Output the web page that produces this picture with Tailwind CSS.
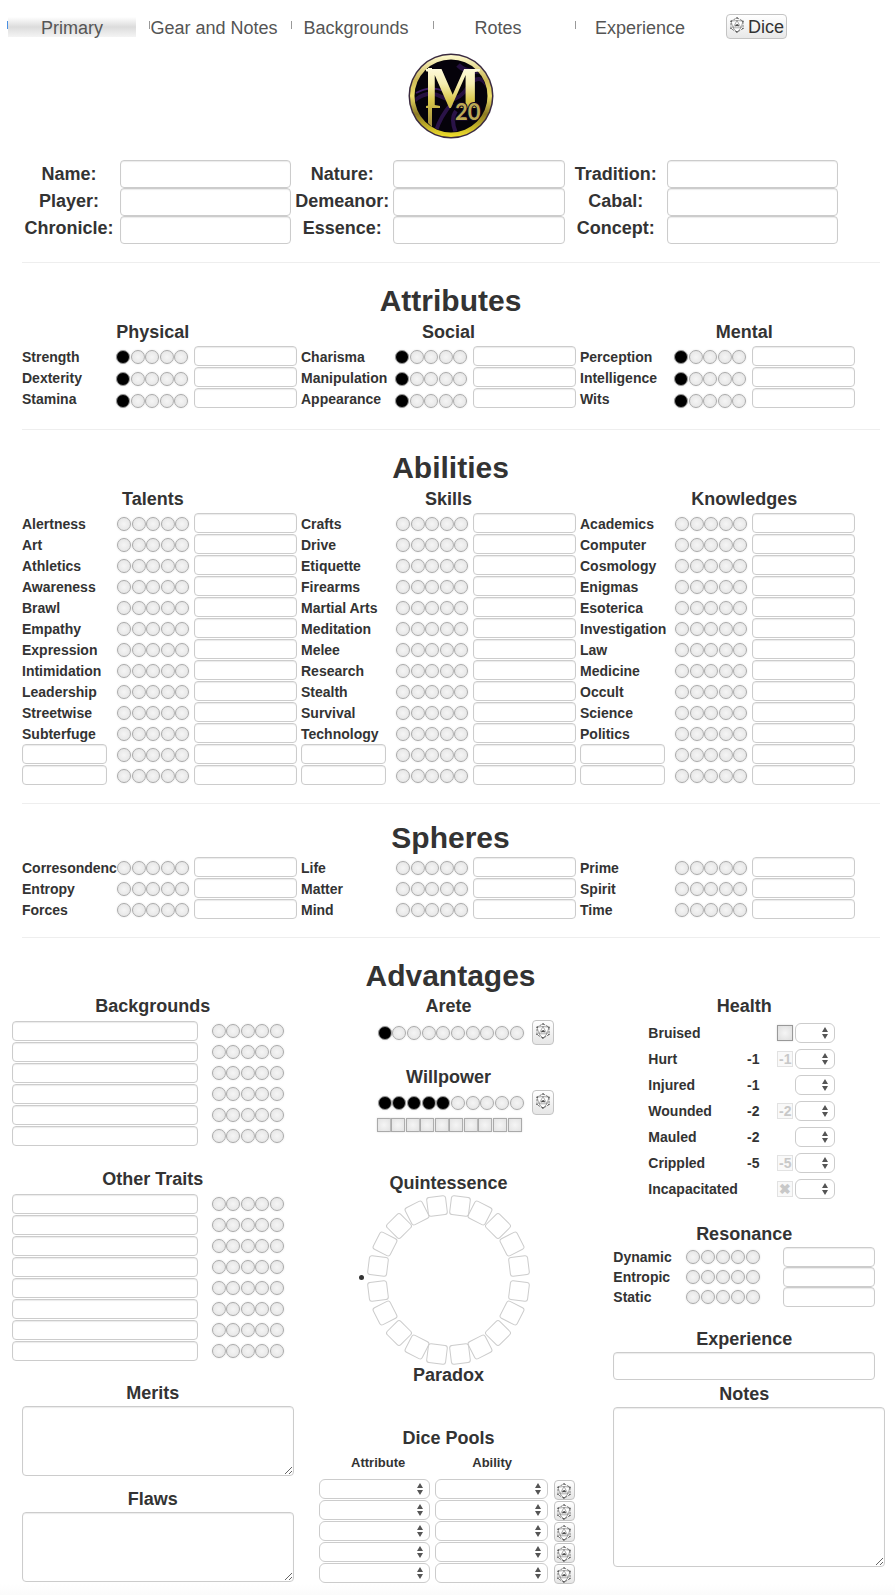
<!DOCTYPE html>
<html lang="en">
<head>
<meta charset="utf-8">
<title>Mage 20 Character Sheet</title>
<script src="https://cdn.jsdelivr.net/npm/@tailwindcss/browser@4"></script>
</head>
<body class="bg-white font-['Liberation_Sans',Arial,sans-serif] text-[#333]">

<!-- Shared d20 icon -->
<svg class="hidden" aria-hidden="true">
  <symbol id="d20" viewBox="0 0 14 16">
    <path d="M7 .8 13 4.2V11.6L7 15.2 1 11.6V4.2Z" fill="#fff" stroke="#444" stroke-width=".7" stroke-dasharray="2.500 1"/>
    <path d="M7 3.500 3 10.8H11ZM1 4.2 7 3.500 13 4.2M1 4.2 3 10.8M13 4.2 11 10.8M3 10.8 7 15.2 11 10.8" fill="none" stroke="#555" stroke-width=".5"/>
    <path d="M5.4 9.4 6.3 7.6 7 9.2 7.7 7.4 8.7 9.4" fill="none" stroke="#222" stroke-width=".9"/>
    <path d="M.5 4.2H1.5M12.5 4.2H13.5M.5 11.4H1.5M12.5 11.4H13.5M6.300 1H7.700M6.300 14.9H7.700" stroke="#111" stroke-width=".9"/>
  </symbol>
</svg>

<nav class="flex items-center pt-3.5 pl-2" aria-label="Sheet sections">
  <div class="flex gap-3.5 text-lg leading-[22px] text-[#555]">
    <button class="relative h-5 w-32 bg-[linear-gradient(#fff,#dcdcdc_50%,#f4f4f4)] leading-[22px] whitespace-nowrap before:absolute before:top-1 before:-left-px before:h-2 before:w-px before:bg-[#4a90e2]">Primary</button>
    <button class="relative h-5 w-32 leading-[22px] whitespace-nowrap before:absolute before:top-1 before:-left-px before:h-2 before:w-px before:bg-[#999]">Gear and Notes</button>
    <button class="relative h-5 w-32 leading-[22px] whitespace-nowrap before:absolute before:top-1 before:-left-px before:h-2 before:w-px before:bg-[#999]">Backgrounds</button>
    <button class="relative h-5 w-32 leading-[22px] whitespace-nowrap before:absolute before:top-1 before:-left-px before:h-2 before:w-px before:bg-[#999]">Rotes</button>
    <button class="relative h-5 w-32 leading-[22px] whitespace-nowrap before:absolute before:top-1 before:-left-px before:h-2 before:w-px before:bg-[#999]">Experience</button>
  </div>
  <button class="ml-[22px] flex h-[25px] items-center gap-1 rounded border border-[#c4c4c4] bg-linear-to-b from-white to-[#e8e8e8] pr-0.5 pl-[3px] text-lg leading-6"><svg class="mb-1 h-4 w-3.5 shrink-0"><use href="#d20"/></svg>Dice</button>
</nav>

<main>
  <div class="mt-3 flex justify-center pl-1.5">
  <svg class="h-[90px] w-[90px]" viewBox="0 0 90 90" role="img" aria-label="M20">
    <defs>
      <linearGradient id="ring" x1="0" y1="0" x2="0" y2="1">
        <stop offset="0" stop-color="#fffbd0"/><stop offset=".3" stop-color="#cdb957"/><stop offset=".5" stop-color="#efe06a"/><stop offset=".72" stop-color="#8c7a24"/><stop offset="1" stop-color="#f2e02c"/>
      </linearGradient>
      <linearGradient id="gold" gradientUnits="userSpaceOnUse" x1="0" y1="16" x2="0" y2="72">
        <stop offset="0" stop-color="#fffbe0"/><stop offset=".3" stop-color="#f6eeb0"/><stop offset=".6" stop-color="#d8c64a"/><stop offset="1" stop-color="#a89440"/>
      </linearGradient>
      <clipPath id="face"><circle cx="45" cy="45" r="36"/></clipPath>
    </defs>
    <circle cx="45" cy="45" r="42.500" fill="#3a2a40"/>
    <circle cx="45" cy="45" r="41" fill="url(#ring)"/>
    <circle cx="45" cy="45" r="36.500" fill="#05020a"/>
    <g clip-path="url(#face)" fill="none" stroke="#3a1b63">
      <path d="M8 50Q22 38 36 46T62 36T84 40" stroke-width="4" opacity=".6"/>
      <path d="M10 42Q24 34 38 40" stroke-width="2"/>
      <path d="M46 52Q34 66 30 80M50 60Q44 68 50 82" stroke-width="4" opacity=".7"/>
      <path d="M52 14Q60 22 74 20" stroke-width="5" opacity=".6"/>
    </g>
    <path d="M22 17H26V76L22 72Z" fill="url(#gold)"/>
    <text font-family="Liberation Serif" font-weight="700" font-size="60" fill="url(#gold)"><tspan x="19" y="57">M</tspan><tspan x="49" y="69" font-family="Lato" font-size="22" fill="#bca955" stroke="#120820" stroke-width="2" paint-order="stroke">20</tspan></text>
  </svg>
  </div>

  <section id="identity" class="mt-[19px] mr-[57px] ml-[18px] grid grid-cols-[102px_1fr_102px_1fr_102px_1fr]" aria-label="Character"></section>

  <hr class="mt-[18px] mr-[15px] ml-[22px] border-[#eee]">
  <section class="mt-[19px]">
    <h2 class="pl-1.5 text-center text-3xl leading-[38px] font-bold">Attributes</h2>
    <div class="mr-[3px] mb-[3px] ml-[5px] grid grid-cols-3 pt-px text-center text-lg leading-[22px] font-bold"><h3>Physical</h3><h3>Social</h3><h3>Mental</h3></div>
    <div id="attributes" class="mr-9 ml-[22px] grid grid-cols-3"></div>
  </section>

  <hr class="mt-[17px] mr-[15px] ml-[22px] border-[#eee]">
  <section class="mt-[19px]">
    <h2 class="pl-1.5 text-center text-3xl leading-[38px] font-bold">Abilities</h2>
    <div class="mr-[3px] mb-[3px] ml-[5px] grid grid-cols-3 pt-px text-center text-lg leading-[22px] font-bold"><h3>Talents</h3><h3>Skills</h3><h3>Knowledges</h3></div>
    <div id="abilities" class="mr-9 ml-[22px] grid grid-cols-3"></div>
  </section>

  <hr class="mt-[17px] mr-[15px] ml-[22px] border-[#eee]">
  <section class="mt-[15px]">
    <h2 class="pl-1.5 text-center text-3xl leading-[38px] font-bold">Spheres</h2>
    <div id="spheres" class="mr-9 ml-[22px] grid grid-cols-3"></div>
  </section>

  <hr class="mt-[17px] mr-[15px] ml-[22px] border-[#eee]">
  <section class="mt-[19px]">
    <h2 class="pl-1.5 text-center text-3xl leading-[38px] font-bold">Advantages</h2>
    <div class="mr-[3px] ml-[5px] grid grid-cols-3 items-start">
      <div>
        <h3 class="mb-1 text-center text-lg leading-[22px] font-bold">Backgrounds</h3>
        <div id="backgrounds"></div>
        <h3 class="mt-[21px] mb-1 text-center text-lg leading-[22px] font-bold">Other Traits</h3>
        <div id="traits"></div>
        <h3 class="mt-5 mb-0.5 text-center text-lg leading-[22px] font-bold"><label for="merits">Merits</label></h3>
        <div class="mr-[7px] ml-[17px]"><textarea id="merits" class="block h-[70px] w-full resize rounded border border-[#ccc] shadow-[inset_0_1px_1px_rgba(0,0,0,0.08)]"></textarea></div>
        <h3 class="mt-3 mb-0.5 text-center text-lg leading-[22px] font-bold"><label for="flaws">Flaws</label></h3>
        <div class="mr-[7px] ml-[17px]"><textarea id="flaws" class="block h-[70px] w-full resize rounded border border-[#ccc] shadow-[inset_0_1px_1px_rgba(0,0,0,0.08)]"></textarea></div>
      </div>

      <div>
        <h3 class="mb-[3px] text-center text-lg leading-[22px] font-bold">Arete</h3>
        <div id="arete" class="ml-[77px] flex items-center gap-2"></div>
        <h3 class="mt-[21px] mb-0.5 text-center text-lg leading-[22px] font-bold">Willpower</h3>
        <div id="willpower" class="ml-[77px] flex items-center gap-2"></div>
        <div id="spent" class="mt-[3px] ml-[76px] flex w-[145px] justify-between"></div>
        <h3 class="mt-10 text-center text-lg leading-[22px] font-bold">Quintessence</h3>
        <div id="wheel" class="relative mx-auto h-[170px] w-[164px]"></div>
        <h3 class="text-center text-lg leading-[22px] font-bold">Paradox</h3>
        <h3 class="mt-[41px] mb-1 text-center text-lg leading-[22px] font-bold">Dice Pools</h3>
        <div id="pools" class="ml-[18px] grid grid-cols-[111px_113px_22px] gap-x-[5px] text-center text-[13px] leading-5 font-bold">
          <h4 class="mb-1.5 pl-2">Attribute</h4><h4 class="mb-1.5 pl-0.5">Ability</h4><span></span>
        </div>
      </div>

      <div>
        <h3 class="mb-[3px] text-center text-lg leading-[22px] font-bold">Health</h3>
        <div id="health" class="ml-[52px]"></div>
        <h3 class="mt-[21px] mb-0.5 text-center text-lg leading-[22px] font-bold">Resonance</h3>
        <div id="resonance" class="mr-[17px] ml-[17px]"></div>
        <h3 class="mt-[21px] mb-0.5 text-center text-lg leading-[22px] font-bold"><label for="xp">Experience</label></h3>
        <div class="mr-[17px] ml-[17px]"><input id="xp" class="block h-7 w-full rounded border border-[#ccc] px-1 shadow-[inset_0_1px_1px_rgba(0,0,0,0.08)]"></div>
        <h3 class="mt-[3px] mb-0.5 text-center text-lg leading-[22px] font-bold"><label for="notes">Notes</label></h3>
        <div class="mr-[7px] ml-[17px]"><textarea id="notes" class="block h-40 w-full resize rounded border border-[#ccc] shadow-[inset_0_1px_1px_rgba(0,0,0,0.08)]"></textarea></div>
      </div>
    </div>
  </section>
</main>
<div class="h-[13px] bg-linear-to-b from-white to-[#fafafa]"></div>

<script>
const $ = id => document.getElementById(id);
const times = (n, f) => Array.from({length: n}, (_, i) => f(i)).join('');
const field = (label, id) => `<input aria-label="${label}" ${id ? `id="${id}"` : ''} class="mb-px block h-5 w-full rounded border border-[#ccc] px-1 text-sm shadow-[inset_0_1px_1px_rgba(0,0,0,0.08)]">`;
const dots = (label, n, on) => times(n, i =>
  `<input type="checkbox" aria-label="${label} ${i + 1}" ${i < on ? 'checked' : ''} class="size-3.5 shrink-0 appearance-none rounded-full border border-[#aaa] bg-[radial-gradient(#f5f5f5,#e2e2e2)] shadow-[0_0_2px_#ddd] checked:border-[#999] checked:bg-black checked:bg-none">`);
const die = label => `<button aria-label="Roll ${label}" class="flex h-[25px] w-[22px] items-center justify-center rounded border border-[#c4c4c4] bg-linear-to-b from-white to-[#e6e6e6]"><svg class="mb-1 h-4 w-3.5"><use href="#d20"/></svg></button>`;
const picker = label => `<div class="relative h-5"><select aria-label="${label}" class="block h-5 w-full appearance-none rounded-md border border-[#ccc] bg-white px-1 text-xs"><option></option><option>1</option><option>2</option></select><svg class="pointer-events-none absolute top-1 right-[7px] h-3 w-1.5" viewBox="0 0 6 12"><path d="M3 0 6 5H0ZM3 12 0 7H6Z" fill="#555"/></svg></div>`;

/* Identity block: label column next to field column, three times */
$('identity').innerHTML = [['Name', 'Player', 'Chronicle'], ['Nature', 'Demeanor', 'Essence'], ['Tradition', 'Cabal', 'Concept']].map(g =>
  `<div class="pt-px text-center text-lg font-bold">${g.map(n => `<label for="f-${n}" class="block leading-[27px]">${n}:</label>`).join('')}</div>
   <div>${g.map(n => `<input id="f-${n}" class="block h-7 w-full rounded border border-[#ccc] px-1 shadow-[inset_0_1px_1px_rgba(0,0,0,0.08)]">`).join('')}</div>`).join('');

/* Rated traits: name, five dots, speciality */
const group = (names, on, dotColumn, dotRow) => `<div class="flex pr-1">
  <div class="w-[94px] shrink-0 text-sm font-bold">${names.map(n => n ? `<label for="s-${n}" class="block h-[21px] leading-[23px] whitespace-nowrap">${n}</label>` : `<div class="w-[85px]">${field('Custom ability')}</div>`).join('')}</div>
  <div class="${dotColumn}">${names.map(n => `<div class="${dotRow}">${dots(n || 'Custom', 5, on)}</div>`).join('')}</div>
  <div class="min-w-0 flex-1">${names.map(n => field((n || 'Custom') + ' speciality', n ? 's-' + n : '')).join('')}</div>
</div>`;
const render = (id, groups, on, dotColumn, dotRow) => $(id).innerHTML = groups.map(g => group(g, on, dotColumn, dotRow)).join('');
render('attributes', [['Strength', 'Dexterity', 'Stamina'], ['Charisma', 'Manipulation', 'Appearance'], ['Perception', 'Intelligence', 'Wits']], 1, 'mr-1.5 w-[72px] shrink-0', 'flex h-[22px] items-center justify-between');
render('abilities', [
  ['Alertness', 'Art', 'Athletics', 'Awareness', 'Brawl', 'Empathy', 'Expression', 'Intimidation', 'Leadership', 'Streetwise', 'Subterfuge', '', ''],
  ['Crafts', 'Drive', 'Etiquette', 'Firearms', 'Martial Arts', 'Meditation', 'Melee', 'Research', 'Stealth', 'Survival', 'Technology', '', ''],
  ['Academics', 'Computer', 'Cosmology', 'Enigmas', 'Esoterica', 'Investigation', 'Law', 'Medicine', 'Occult', 'Science', 'Politics', '', '']
], 0, 'mr-[5px] ml-px w-[72px] shrink-0', 'flex h-[21px] items-center justify-between');
render('spheres', [['Corresondence', 'Entropy', 'Forces'], ['Life', 'Matter', 'Mind'], ['Prime', 'Spirit', 'Time']], 0, 'relative mr-[5px] ml-px w-[72px] shrink-0 bg-white', 'flex h-[21px] items-center justify-between');

const openTraits = (label, n) => times(n, i => `<div class="flex pr-[17px] pl-[7px]"><div class="min-w-0 flex-1">${field(label + ' ' + (i + 1))}</div><div class="ml-3.5 flex h-5 w-[72px] items-center justify-between">${dots(label, 5, 0)}</div></div>`);
$('backgrounds').innerHTML = openTraits('Background', 6);
$('traits').innerHTML = openTraits('Trait', 8);

$('arete').innerHTML = `<div class="flex w-[146px] justify-between">${dots('Arete', 10, 1)}</div>${die('Arete')}`;
$('willpower').innerHTML = `<div class="flex w-[146px] justify-between">${dots('Willpower', 10, 5)}</div>${die('Willpower')}`;
$('spent').innerHTML = times(10, i => `<input type="checkbox" aria-label="Willpower spent ${i + 1}" class="size-3.5 appearance-none border border-[#aaa] bg-[radial-gradient(#f5f5f5,#e2e2e2)] shadow-[0_0_2px_#ddd]">`);

/* Quintessence wheel: [x, y, angle] of the right half, mirrored to the left */
const right = [[84, 2, 7], [104, 9, 27], [122, 22, 45], [136, 40, -27], [143, 62, -7], [143, 87, 7], [136, 109, 27], [122, 129, 45], [104, 143, -27], [84, 150, -7]];
$('wheel').innerHTML = right.concat(right.map(([x, y, a]) => [145 - x, y, -a])).map(([x, y, a], i) =>
  `<input type="checkbox" aria-label="Wheel ${i + 1}" class="absolute size-5 appearance-none rounded-[3px] border border-[#ccc]" style="left:${x}px;top:${y}px;rotate:${a}deg">`).join('') +
  '<span class="absolute top-[81px] -left-[7px] size-[5px] rounded-full bg-[#333]"></span>';

$('pools').insertAdjacentHTML('beforeend', times(5, i => `<div class="h-[21px]">${picker('Attribute ' + (i + 1))}</div><div class="h-[21px]">${picker('Ability ' + (i + 1))}</div>
  <button aria-label="Roll pool ${i + 1}" class="mt-px ml-px flex h-5 items-center justify-center rounded border border-[#c4c4c4] bg-linear-to-b from-white to-[#e6e6e6]"><svg class="mt-0.5 h-4 w-3.5"><use href="#d20"/></svg></button>`));

$('health').innerHTML = [['Bruised', '', ' '], ['Hurt', '-1', '-1'], ['Injured', '-1', ''], ['Wounded', '-2', '-2'], ['Mauled', '-2', ''], ['Crippled', '-5', '-5'], ['Incapacitated', '', '✖']].map(([n, p, b]) =>
  `<div class="flex h-[26px] items-center text-sm font-bold"><span class="w-[90px] whitespace-nowrap">${n}</span><span class="mr-[9px] w-[30px] text-center">${p}</span>
   <span class="mr-0.5 size-4">${b === ' ' ? '<input type="checkbox" aria-label="Bruised" class="block size-4 appearance-none border border-[#999] bg-[radial-gradient(#f5f5f5,#dedede)] shadow-[0_0_2px_#ddd]">' : b ? `<button disabled class="flex size-4 items-center justify-center border border-[#e2e2e2] bg-[#f9f9f9] leading-4 text-[#c8c8c8]">${b}</button>` : ''}</span>
   <div class="w-10">${picker(n)}</div></div>`).join('');

$('resonance').innerHTML = ['Dynamic', 'Entropic', 'Static'].map(n =>
  `<div class="flex h-5 text-sm leading-5 font-bold"><label for="r-${n}" class="w-[73px] shrink-0">${n}</label><div class="mr-[23px] flex w-[74px] shrink-0 items-center justify-between">${dots(n, 5, 0)}</div><div class="min-w-0 flex-1">${field(n, 'r-' + n)}</div></div>`).join('');
</script>
</body>
</html>
